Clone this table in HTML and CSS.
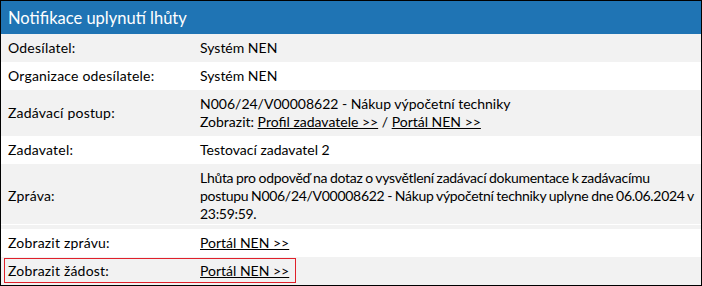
FILE: index.html
```html
<!DOCTYPE html>
<html lang="cs">
<head>
<meta charset="utf-8">
<title>Notifikace uplynutí lhůty</title>
<link rel="stylesheet" href="styles.css">
</head>
<body>
<div class="panel">
  <div class="header">Notifikace uplynutí lhůty</div>
  <div class="row grey">
    <div class="label">Odesílatel:</div>
    <div class="value">Systém NEN</div>
  </div>
  <div class="row">
    <div class="label">Organizace odesílatele:</div>
    <div class="value">Systém NEN</div>
  </div>
  <div class="row grey">
    <div class="label">Zadávací postup:</div>
    <div class="value">N006/24/V00008622 - Nákup výpočetní techniky<br>Zobrazit: <a href="#">Profil zadavatele &gt;&gt;</a> / <a href="#">Portál NEN &gt;&gt;</a></div>
  </div>
  <div class="row">
    <div class="label">Zadavatel:</div>
    <div class="value">Testovací zadavatel 2</div>
  </div>
  <div class="row grey message">
    <div class="label">Zpráva:</div>
    <div class="value">Lhůta pro odpověď na dotaz o vysvětlení zadávací dokumentace k zadávacímu postupu N006/24/V00008622 - Nákup výpočetní techniky uplyne dne 06.06.2024 v 23:59:59.</div>
  </div>
  <div class="row">
    <div class="label">Zobrazit zprávu:</div>
    <div class="value"><a href="#">Portál NEN &gt;&gt;</a></div>
  </div>
  <div class="row grey highlighted">
    <div class="label">Zobrazit žádost:</div>
    <div class="value"><a href="#">Portál NEN &gt;&gt;</a></div>
    <div class="marker"></div>
  </div>
</div>
</body>
</html>
```

FILE: styles.css
```css
html, body {
  margin: 0;
  padding: 0;
  background: #ffffff;
}

.panel {
  width: 700px;
  border: 1px solid #000000;
  font-family: "Lato", "Open Sans", sans-serif;
  font-size: 14px;
  line-height: 18px;
  color: #000000;
}

.header {
  height: 33px;
  background: #1f74b4;
  color: #ffffff;
  font-size: 16.5px;
  display: flex;
  align-items: center;
  padding-left: 7px;
}

.row {
  display: grid;
  grid-template-columns: 199px 1fr;
  padding: 5px 0;
  background: #ffffff;
  position: relative;
}

.row.grey {
  background: #f2f2f2;
}

.row.message {
  padding-bottom: 6px;
  background: linear-gradient(#f2f2f2 0, #f2f2f2 60px, #ffffff 60px, #ffffff 61px, #f2f2f2 61px);
}

.row.message .value {
  letter-spacing: -0.3px;
  word-spacing: -0.5px;
  padding-right: 2px;
}

.label {
  padding-left: 7px;
  display: flex;
  align-items: center;
  letter-spacing: 0.2px;
}

.value {
  padding-right: 8px;
}

.value a {
  color: #000000;
  text-decoration: underline;
}

.marker {
  position: absolute;
  left: 3px;
  top: 1px;
  width: 290px;
  height: 23px;
  border: 1px solid #e0202a;
}
```
